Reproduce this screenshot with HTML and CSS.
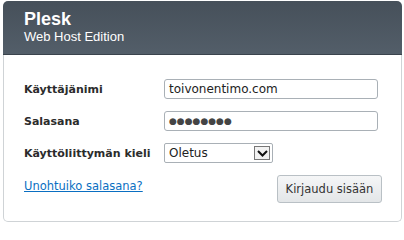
FILE: index.html
```html
<!DOCTYPE html>
<html>
<head>
<meta charset="utf-8">
<link rel="stylesheet" href="styles.css">
</head>
<body>
<div class="panel">
  <div class="head">
    <div class="title">Plesk</div>
    <div class="subtitle">Web Host Edition</div>
  </div>
  <div class="body">
    <div class="row">
      <label class="lbl">Käyttäjänimi</label>
      <div class="field wide">toivonentimo.com</div>
    </div>
    <div class="row">
      <label class="lbl">Salasana</label>
      <div class="field wide dots">●●●●●●●●</div>
    </div>
    <div class="row">
      <label class="lbl">Käyttöliittymän kieli</label>
      <div class="field sel"><span class="selval">Oletus</span><span class="arrow"><svg width="11" height="7" viewBox="0 0 11 7"><path d="M1 1 L5.5 5.5 L10 1" fill="none" stroke="#111" stroke-width="2"/></svg></span></div>
    </div>
    <div class="foot">
      <a class="link" href="#">Unohtuiko salasana?</a>
      <div class="btn">Kirjaudu sisään</div>
    </div>
  </div>
</div>
</body>
</html>
```
FILE: styles.css
```css
html, body { margin: 0; padding: 0; background: #fff; }
body { padding: 1px 2px 0 3px; font-family: "DejaVu Sans", Verdana, sans-serif; }
.panel { width: 399px; }
.head {
  height: 54px;
  box-sizing: border-box;
  background: linear-gradient(#46505a, #535e69);
  border-bottom: 1px solid #3a434c;
  border-radius: 5px 5px 0 0;
  padding: 9px 0 0 21px;
  color: #fff;
  font-family: "Liberation Sans", Arial, sans-serif;
}
.title { font-size: 18px; font-weight: bold; line-height: 19px; }
.subtitle { font-size: 13px; line-height: 15px; }
.body {
  border: 1px solid #cfd3d6;
  border-top: none;
  border-radius: 0 0 5px 5px;
  height: 167px;
  box-sizing: border-box;
  padding: 24px 0 0 20px;
}
.row { display: flex; align-items: center; height: 20px; margin-bottom: 12px; }
.lbl { width: 140px; font-size: 11px; font-weight: bold; color: #2b2b2b; }
.field {
  height: 20px; box-sizing: border-box;
  border: 1px solid #a9b0b6; border-radius: 3px;
  font-size: 12px; color: #222; padding: 0 4px;
  display: flex; align-items: center;
}
.wide { width: 214px; }
.dots { font-size: 9px; letter-spacing: 0; color: #444; }
.sel { width: 109px; padding-right: 2px; justify-content: space-between; border-radius: 2px; }
.arrow { width: 16px; height: 14px; border: 1px solid #777; background: #f2f2f2; display: flex; align-items: center; justify-content: center; box-sizing: border-box; }
.foot { display: flex; justify-content: space-between; align-items: center; margin-top: 11px; padding-right: 19px; }
.link { font-size: 11.5px; color: #0a6fc2; text-decoration: underline; margin-top: -6px; }
.btn {
  width: 105px; height: 28px; box-sizing: border-box;
  border: 1px solid #b9c0c5; border-radius: 3px;
  background: linear-gradient(#f5f6f7, #e3e6e8);
  font-size: 11.5px; color: #333;
  display: flex; align-items: center; justify-content: center;
}
```
